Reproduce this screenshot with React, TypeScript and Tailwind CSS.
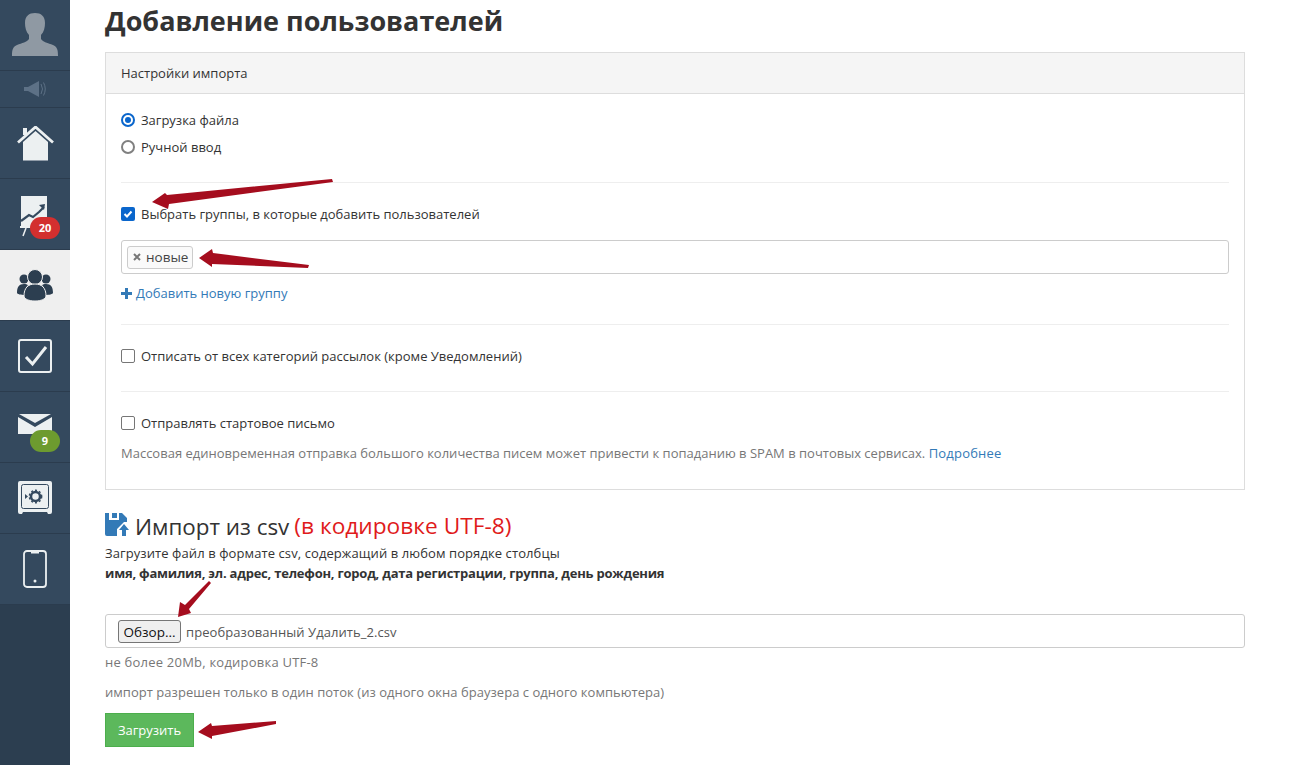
import React from "react";

const font = "font-['Open_Sans','Noto_Sans',sans-serif]";

function Badge({ color, children }: { color: string; children: React.ReactNode }) {
  return (
    <span className={`absolute left-[30px] top-[38px] flex h-[22px] w-[30px] items-center justify-center rounded-[11px] text-[11px] font-bold text-white ${color}`}>
      {children}
    </span>
  );
}

function NavItem({ active, children, badge }: { active?: boolean; children: React.ReactNode; badge?: React.ReactNode }) {
  return (
    <div className={`relative flex h-[71px] items-center justify-center border-b border-[#2b3c4e] ${active ? "bg-[#efefef]" : ""}`}>
      {children}
      {badge}
    </div>
  );
}

function Sidebar() {
  return (
    <div className="flex w-[70px] shrink-0 flex-col bg-[#2c3e50]">
      <div className="bg-[#34495e]">
        <div className="flex h-[71px] items-end justify-center border-b border-[#2b3c4e] pb-[13px]">
          <svg width="46" height="45" viewBox="0 0 46 45" fill="#8f99a3">
            <path d="M0 44c0-7 1-9 5-11 5-2 10-3 12-6v-4c-3-3-4-8-4-12C13 4 17 1 23 1s10 3 10 10c0 4-1 9-4 12v4c2 3 7 4 12 6 4 2 5 4 5 11z" />
          </svg>
        </div>
        <div className="flex h-[37px] items-center justify-center border-b border-[#2b3c4e]">
          <svg width="22" height="16" viewBox="0 0 22 16" fill="#5d7186">
            <rect x="0" y="6" width="4" height="4" />
            <path d="M4 6l11-6v16L4 10z" />
            <path d="M17 3q3 5 0 10M19.500 1.500q3.500 6.500 0 13" fill="none" stroke="#5d7186" strokeWidth="1" />
          </svg>
        </div>
        <NavItem>
          <svg width="37" height="35" viewBox="0 0 37 35" fill="#ecf0f1">
            <path d="M6 16L18.500 5 31 16v18.500H6z" />
            <path d="M1 16.500L18.500 1 36 16.500" fill="none" stroke="#ecf0f1" strokeWidth="2.800" />
            <rect x="6" y="2" width="4" height="7" />
          </svg>
        </NavItem>
        <NavItem badge={<Badge color="bg-[#d32f2f]">20</Badge>}>
          <svg width="28" height="42" viewBox="0 0 28 42" className="-translate-x-[1px] translate-y-[1px] self-start mt-[15px]">
            <rect x="1" y="1" width="26" height="30" fill="#ecf0f1" />
            <path d="M1 26l8-6 4 2 6-5 5-5" fill="none" stroke="#34495e" strokeWidth="2.200" />
            <path d="M19 10l6-1-1 6z" fill="#34495e" />
            <rect x="0" y="31" width="14" height="2" fill="#ecf0f1" />
            <path d="M6 33l-3 8" stroke="#ecf0f1" strokeWidth="1.500" />
          </svg>
        </NavItem>
        <NavItem active>
          <svg width="36" height="32" viewBox="0 0 36 32" fill="#2c3e50">
            <circle cx="7" cy="10" r="4.500" />
            <circle cx="29" cy="10" r="4.500" />
            <path d="M0 24c0-6 2-9 7-9 2 0 3 .5 4 1-2 2-3 5-3 10-4 0-8-1-8-2zM36 24c0-6-2-9-7-9-2 0-3 .5-4 1 2 2 3 5 3 10 4 0 8-1 8-2z" />
            <circle cx="18" cy="8" r="7.500" stroke="#efefef" strokeWidth="1" />
            <path d="M7 27c0-8 4-12 11-12s11 4 11 12c0 3-5 5-11 5S7 30 7 27z" stroke="#efefef" strokeWidth="1" />
          </svg>
        </NavItem>
        <NavItem>
          <svg width="34" height="34" viewBox="0 0 34 34" fill="none">
            <rect x="1" y="1" width="32" height="32" rx="2" stroke="#ecf0f1" strokeWidth="2" />
            <path d="M8 18l6.500 7L28 8" stroke="#ecf0f1" strokeWidth="3" />
          </svg>
        </NavItem>
        <NavItem badge={<Badge color="bg-[#6d9b2f]">9</Badge>}>
          <svg width="34" height="20" viewBox="0 0 34 20" className="-translate-y-[3px]">
            <path d="M0 3l17 10L34 3v17H0z" fill="#ecf0f1" />
            <path d="M1 0h32L17 9z" fill="#ecf0f1" />
          </svg>
        </NavItem>
        <NavItem>
          <svg width="34" height="34" viewBox="0 0 34 34" fill="none">
            <path d="M2 0h30a2 2 0 012 2v29a2 2 0 01-2 2h-2l-1-2H5l-1 2H2a2 2 0 01-2-2V2a2 2 0 012-2z" fill="#ecf0f1" />
            <rect x="3.500" y="3.500" width="27" height="24" rx="2" stroke="#34495e" strokeWidth="1" />
            <circle cx="17.500" cy="15.500" r="4.500" stroke="#34495e" strokeWidth="2.500" />
            <circle cx="17.500" cy="15.500" r="6.200" stroke="#34495e" strokeWidth="1.400" strokeDasharray="2 2" />
            <path d="M7 13l3 2.500-3 2.500z" fill="#34495e" />
          </svg>
        </NavItem>
        <NavItem>
          <svg width="24" height="38" viewBox="0 0 24 38" fill="none">
            <rect x="1" y="1" width="22" height="36" rx="3" stroke="#ecf0f1" strokeWidth="1.800" />
            <rect x="8" y="1" width="8" height="2.500" fill="#ecf0f1" />
            <circle cx="12" cy="31" r="1.500" fill="#ecf0f1" />
          </svg>
        </NavItem>
      </div>
      <div className="h-[161px]" />
    </div>
  );
}

function Arrow({ className, width, height, d }: { className: string; width: number; height: number; d: string }) {
  return (
    <svg className={`absolute ${className}`} width={width} height={height} viewBox={`0 0 ${width} ${height}`}>
      <path d={d} fill="#a50d1e" />
    </svg>
  );
}

function Check({ checked }: { checked?: boolean }) {
  return checked ? (
    <span className="flex h-[14px] w-[14px] items-center justify-center rounded-[2px] bg-[#0a66cc]">
      <svg width="12" height="12" viewBox="0 0 12 12" fill="none">
        <path d="M2.500 6l2.500 2.500L9.500 3.500" stroke="white" strokeWidth="2" />
      </svg>
    </span>
  ) : (
    <span className="h-[14px] w-[14px] rounded-[2px] border border-[#767676] bg-white" />
  );
}

function Radio({ checked }: { checked?: boolean }) {
  return checked ? (
    <span className="flex h-[14px] w-[14px] items-center justify-center rounded-full border-2 border-[#0a66cc] bg-white">
      <span className="h-[6px] w-[6px] rounded-full bg-[#0a66cc]" />
    </span>
  ) : (
    <span className="h-[14px] w-[14px] rounded-full border-2 border-[#808080] bg-white" />
  );
}

function Row({ control, children }: { control: React.ReactNode; children: React.ReactNode }) {
  return (
    <div className="flex h-[20px] items-center text-[13px] text-[#333]">
      <span className="flex w-[20px] shrink-0 items-center">{control}</span>
      <span className="pt-[2px]">{children}</span>
    </div>
  );
}

function Panel() {
  return (
    <div className="mt-[15px] h-[438px] border border-[#ddd] bg-white">
      <div className="flex h-[41px] items-center border-b border-[#ddd] bg-[#f5f5f5] px-[15px] pt-[2px] text-[13px] text-[#333]">
        Настройки импорта
      </div>
      <div className="px-[15px] pt-[16px]">
        <Row control={<Radio checked />}>Загрузка файла</Row>
        <div className="mt-[7px]">
          <Row control={<Radio />}>Ручной ввод</Row>
        </div>
        <div className="mt-[25px] border-t border-[#eee]" />
        <div className="mt-[21px]">
          <Row control={<Check checked />}>Выбрать группы, в которые добавить пользователей</Row>
        </div>
        <div className="mt-[16px] flex h-[34px] items-center rounded-[3px] border border-[#ccc] px-[5px]">
          <span className="flex h-[23px] items-center gap-[5px] rounded-[3px] border border-[#ccc] bg-[#fafafa] pl-[5px] pr-[4px] text-[13.500px] text-[#444]">
            <svg width="8" height="8" viewBox="0 0 8 8">
              <path d="M1 1l6 6M7 1L1 7" stroke="#777" strokeWidth="2" />
            </svg>
            новые
          </span>
        </div>
        <div className="mt-[9px] flex h-[20px] items-center gap-[4px] text-[13px] text-[#337ab7]">
          <svg width="11" height="11" viewBox="0 0 11 11" fill="#337ab7">
            <path d="M4 0h3v4h4v3H7v4H4V7H0V4h4z" />
          </svg>
          <span className="pt-[2px]">Добавить новую группу</span>
        </div>
        <div className="mt-[21px] border-t border-[#eee]" />
        <div className="mt-[21px]">
          <Row control={<Check />}>Отписать от всех категорий рассылок (кроме Уведомлений)</Row>
        </div>
        <div className="mt-[25px] border-t border-[#eee]" />
        <div className="mt-[21px]">
          <Row control={<Check />}>Отправлять стартовое письмо</Row>
        </div>
        <p className="mt-[10px] text-[13px] leading-[20px] text-[#777]">
          Массовая единовременная отправка большого количества писем может привести к попаданию в SPAM в почтовых сервисах. <span className="tracking-[0.2px] text-[#337ab7]">Подробнее</span>
        </p>
      </div>
    </div>
  );
}

function ImportSection() {
  return (
    <div>
      <div className="mt-[20px] flex h-[33px] items-center text-[22.400px] text-[#333]">
        <svg width="24" height="24" viewBox="0 0 24 24" className="mr-[6px] -translate-y-[3px]" fill="#337ab7">
          <path d="M0 1h4v7h10V1h3l5 5v4h-3l-7 7v7H2a2 2 0 01-2-2z" />
          <rect x="7" y="1" width="5" height="5" />
          <path d="M19 12l5 6h-3v6h-4v-6h-3z" />
        </svg>
        Импорт из csv<span className="ml-[5px] text-[22.700px] text-[#e01b1b]">(в кодировке UTF-8)</span>
      </div>
      <div className="text-[13px] leading-[20px] text-[#333]">
        <span className="tracking-[0.09px]">Загрузите файл в формате csv, содержащий в любом порядке столбцы</span>
        <br />
        <b className="tracking-[-0.22px]">имя, фамилия, эл. адрес, телефон, город, дата регистрации, группа, день рождения</b>
      </div>
      <div className="mt-[31px] flex h-[34px] items-center rounded-[3px] border border-[#ccc] pl-[12px] text-[13px] text-[#555]">
        <span className="mr-[5px] flex h-[23px] w-[63px] items-center justify-center rounded-[3px] border border-[#767676] bg-[#efefef] pt-[2px] text-[13.500px] text-[#111]">Обзор...</span>
        <span className="pt-[4px] tracking-[0.07px]">преобразованный Удалить_2.csv</span>
      </div>
      <div className="mt-[4px] text-[13px] leading-[20px] tracking-[0.22px] text-[#777]">не более 20Mb, кодировка UTF-8</div>
      <div className="mt-[10px] text-[13px] leading-[20px] tracking-[0.03px] text-[#777]">импорт разрешен только в один поток (из одного окна браузера с одного компьютера)</div>
      <div className="mt-[11px] flex h-[34px] w-[89px] items-center justify-center border border-[#4cae4c] bg-[#5cb85c] pt-[2px] text-[13px] text-white">Загрузить</div>
    </div>
  );
}

export default function App() {
  return (
    <div className={`relative flex h-[765px] w-[1305px] overflow-hidden bg-white ${font}`}>
      <Sidebar />
      <div className="ml-[35px] w-[1140px]">
        <h1 className="mt-[3px] h-[34px] text-[27px] font-bold leading-[36px] text-[#333]">Добавление пользователей</h1>
        <Panel />
        <ImportSection />
      </div>
      <Arrow className="left-[150px] top-[177px]" width={184} height={33} d="M2 25L15 16 17 18 182 2 183 5 19 27 18 32z" />
      <Arrow className="left-[198px] top-[248px]" width={112} height={21} d="M1 10L14 1 15 5 111 17 110 20 14 16 14 19z" />
      <Arrow className="left-[177px] top-[580px]" width={34} height={38} d="M1 37L3 22 8 25 32 1 34 3 12 29 14 33z" />
      <Arrow className="left-[198px] top-[720px]" width={79} height={20} d="M0 12L13 3 14 6 78 1 78 4 14 16 14 19z" />
    </div>
  );
}
